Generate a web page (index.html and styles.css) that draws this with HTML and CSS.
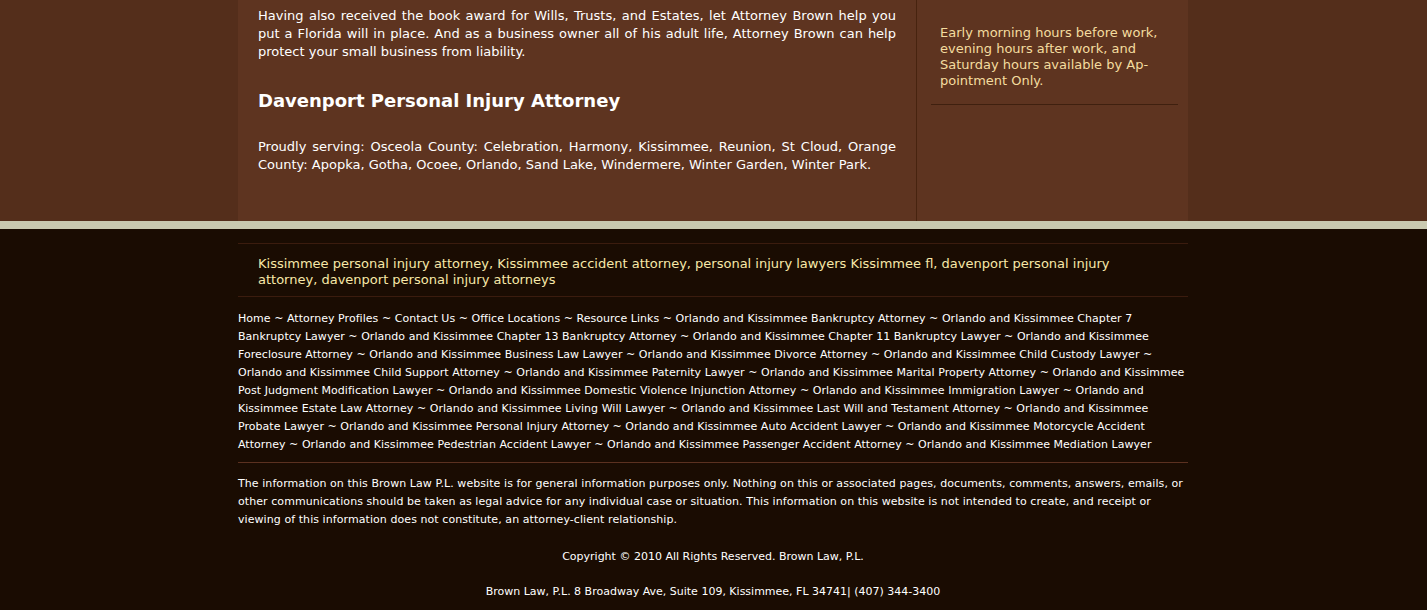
FILE: index.html
```html
<!DOCTYPE html>
<html>
<head>
<meta charset="utf-8">
<link rel="stylesheet" href="styles.css">
</head>
<body>
<div class="top">
  <div class="wrap top-inner">
    <div class="main">
      <p class="para">Having also received the book award for Wills, Trusts, and Estates, let Attorney Brown help you put a Florida will in place. And as a business owner all of his adult life, Attorney Brown can help protect your small business from liability.</p>
      <h2 class="heading">Davenport Personal Injury Attorney</h2>
      <p class="para serving">Proudly serving: Osceola County: Celebration, Harmony, Kissimmee, Reunion, St Cloud, Orange County: Apopka, Gotha, Ocoee, Orlando, Sand Lake, Windermere, Winter Garden, Winter Park.</p>
    </div>
    <div class="side">
      <p class="hours">Early morning hours before work, evening hours after work, and Saturday hours available by Ap&shy;pointment Only.</p>
      <div class="side-rule"></div>
    </div>
  </div>
</div>
<div class="band"></div>
<div class="footer">
  <div class="wrap">
    <div class="keywords">Kissimmee personal injury attorney, Kissimmee accident attorney, personal injury lawyers Kissimmee fl, davenport personal injury attorney, davenport personal injury attorneys</div>
    <div class="links">Home ~ Attorney Profiles ~ Contact Us ~ Office Locations ~ Resource Links ~ Orlando and Kissimmee Bankruptcy Attorney ~ Orlando and Kissimmee Chapter 7 Bankruptcy Lawyer ~ Orlando and Kissimmee Chapter 13 Bankruptcy Attorney ~ Orlando and Kissimmee Chapter 11 Bankruptcy Lawyer ~ Orlando and Kissimmee Foreclosure Attorney ~ Orlando and Kissimmee Business Law Lawyer ~ Orlando and Kissimmee Divorce Attorney ~ Orlando and Kissimmee Child Custody Lawyer ~ Orlando and Kissimmee Child Support Attorney ~ Orlando and Kissimmee Paternity Lawyer ~ Orlando and Kissimmee Marital Property Attorney ~ Orlando and Kissimmee Post Judgment Modification Lawyer ~ Orlando and Kissimmee Domestic Violence Injunction Attorney ~ Orlando and Kissimmee Immigration Lawyer ~ Orlando and Kissimmee Estate Law Attorney ~ Orlando and Kissimmee Living Will Lawyer ~ Orlando and Kissimmee Last Will and Testament Attorney ~ Orlando and Kissimmee Probate Lawyer ~ Orlando and Kissimmee Personal Injury Attorney ~ Orlando and Kissimmee Auto Accident Lawyer ~ Orlando and Kissimmee Motorcycle Accident Attorney ~ Orlando and Kissimmee Pedestrian Accident Lawyer ~ Orlando and Kissimmee Passenger Accident Attorney ~ Orlando and Kissimmee Mediation Lawyer</div>
    <div class="disclaimer">The information on this Brown Law P.L. website is for general information purposes only. Nothing on this or associated pages, documents, comments, answers, emails, or other communications should be taken as legal advice for any individual case or situation. This information on this website is not intended to create, and receipt or viewing of this information does not constitute, an attorney-client relationship.</div>
    <div class="copy">Copyright © 2010 All Rights Reserved. Brown Law, P.L.</div>
    <div class="address">Brown Law, P.L. 8 Broadway Ave, Suite 109, Kissimmee, FL 34741| (407) 344-3400</div>
  </div>
</div>
</body>
</html>
```
FILE: styles.css
```css
html, body {
  margin: 0;
  padding: 0;
}
body {
  font-family: "DejaVu Sans", Verdana, sans-serif;
  background: #1a0c02;
  height: 610px;
  overflow: hidden;
}
.wrap {
  width: 950px;
  margin-left: calc((100% - 951px) / 2);
}
.top {
  background: #542e1b;
}
.top-inner {
  display: flex;
  background: #5e3420;
}
.main {
  width: 638px;
  padding: 0 20px 0 20px;
  height: 221px;
}
.para {
  margin: 0;
  color: #ffffff;
  font-size: 13px;
  line-height: 18px;
  text-align: justify;
}
.para:first-child {
  padding-top: 7px;
}
.heading {
  margin: 29px 0 0;
  color: #ffffff;
  font-size: 18px;
  line-height: 22px;
  font-weight: bold;
}
.serving {
  margin-top: 26px;
}
.side {
  flex: 1;
  border-left: 1px solid #47230f;
  padding: 0 10px 0 14px;
}
.hours {
  margin: 25px 0 0 9px;
  color: #f4dc9f;
  font-size: 13px;
  line-height: 16px;
  width: 230px;
  hyphens: manual;
}
.side-rule {
  margin-top: 15px;
  border-top: 1px solid #3f200f;
}
.band {
  height: 8px;
  background: #c9c9b0;
}
.footer {
  padding-top: 14px;
}
.keywords {
  border-top: 1px solid #3b1c0e;
  border-bottom: 1px solid #3b1c0e;
  padding: 12px 20px 8px;
  color: #f7e8a8;
  font-size: 13px;
  line-height: 16px;
}
.links {
  padding: 13px 0 8px;
  color: #ffffff;
  font-size: 11px;
  line-height: 18px;
  letter-spacing: 0.04px;
  border-bottom: 1px solid #5b3120;
}
.disclaimer {
  padding: 12px 0 0;
  color: #ffffff;
  font-size: 11px;
  line-height: 18px;
  letter-spacing: 0.07px;
}
.copy {
  margin-top: 19px;
  text-align: center;
  color: #ffffff;
  font-size: 11px;
  line-height: 18px;
}
.address {
  margin-top: 17px;
  text-align: center;
  color: #ffffff;
  font-size: 11px;
  line-height: 18px;
}
```
